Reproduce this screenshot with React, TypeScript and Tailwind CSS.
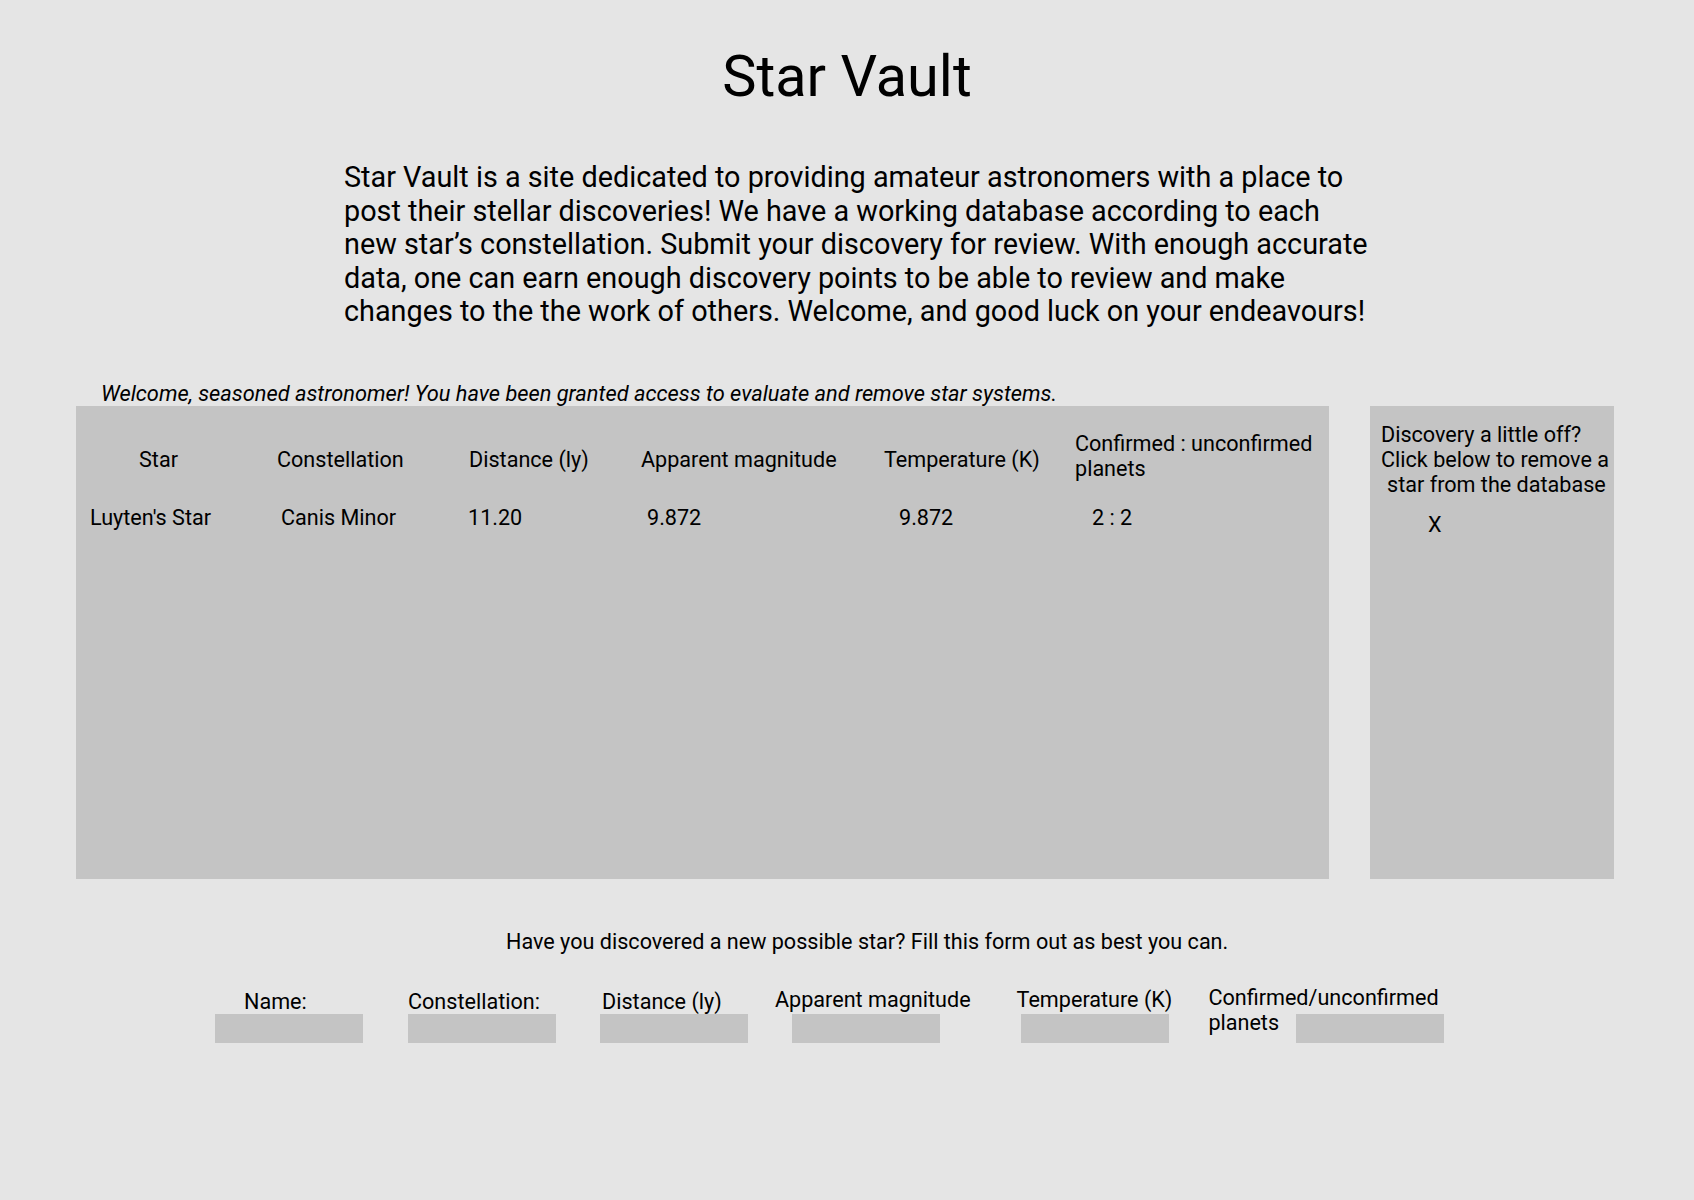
import React from "react";

const headers = [
  { label: "Star", cls: "pl-[63px] pt-[8px]" },
  { label: "Constellation", cls: "pl-[37px] pt-[8px]" },
  { label: "Distance (ly)", cls: "pl-[29px] pt-[8px]" },
  { label: "Apparent magnitude", cls: "pl-[21px] pt-[8px]" },
  { label: "Temperature (K)", cls: "pl-[24px] pt-[8px]" },
];

const row = [
  { value: "Luyten's Star", cls: "pl-[14px]" },
  { value: "Canis Minor", cls: "pl-[41px]" },
  { value: "11.20", cls: "pl-[28px]" },
  { value: "9.872", cls: "pl-[27px]" },
  { value: "9.872", cls: "pl-[39px]" },
  { value: "2 : 2", cls: "pl-[32px]" },
];

function Field({ label, labelCls = "", inputCls = "" }: { label: string; labelCls?: string; inputCls?: string }) {
  return (
    <div className="flex flex-col">
      <span className={`text-[21.6px] leading-[24px] whitespace-nowrap ${labelCls}`}>{label}</span>
      <div className={`h-[29px] w-[148px] bg-[#c4c4c4] ${inputCls}`} />
    </div>
  );
}

export default function App() {
  return (
    <div
      className="min-h-[1200px] w-full bg-[#e5e5e5] text-black"
      style={{ fontFamily: "Roboto, 'Noto Sans', sans-serif" }}
    >
      {/* Header */}
      <h1 className="pt-[44px] text-center text-[57.6px] leading-[66px] font-normal">Star Vault</h1>

      <p className="mt-[51px] ml-[344px] w-[1080px] text-[28.8px] leading-[33.6px]">
        Star Vault is a site dedicated to providing amateur astronomers with a place to
        <br />
        post their stellar discoveries! We have a working database according to each
        <br />
        new star’s constellation. Submit your discovery for review. With enough accurate
        <br />
        data, one can earn enough discovery points to be able to review and make
        <br />
        changes to the the work of others. Welcome, and good luck on your endeavours!
      </p>

      {/* Admin area */}
      <p className="mt-[53px] ml-[101px] text-[21.8px] leading-[24px] italic">
        Welcome, seasoned astronomer! You have been granted access to evaluate and remove star systems.
      </p>

      <div className="ml-[76px] flex gap-[41px]">
        <div className="h-[473px] w-[1253px] bg-[#c4c4c4] pt-[25px] text-[21.6px] leading-[25px]">
          <div className="grid grid-cols-[164px_200px_180px_240px_200px_1fr] items-center">
            {headers.map((h) => (
              <div key={h.label} className={h.cls}>
                {h.label}
              </div>
            ))}
            <div className="pl-[15px] whitespace-nowrap">
              Confirmed : unconfirmed
              <br />
              planets
            </div>
          </div>
          <div className="mt-[24px] grid grid-cols-[164px_200px_180px_240px_200px_1fr]">
            {row.map((c, i) => (
              <div key={i} className={c.cls}>
                {c.value}
              </div>
            ))}
          </div>
        </div>

        <div className="h-[473px] w-[244px] bg-[#c4c4c4] pt-[16px] pl-[11px] text-[21.6px] leading-[25px]">
          <div>Discovery a little off?</div>
          <div>Click below to remove a</div>
          <div className="pl-[6px]">star from the database</div>
          <button className="mt-[15px] ml-[47px] leading-[25px]">X</button>
        </div>
      </div>

      {/* Submission form */}
      <p className="mt-[51px] pl-[506px] text-[21.6px] leading-[24px]">
        Have you discovered a new possible star? Fill this form out as best you can.
      </p>

      <div className="mt-[32px] ml-[215px] flex items-end">
        <Field label="Name:" labelCls="pl-[29px]" />
        <div className="ml-[45px]">
          <Field label="Constellation:" />
        </div>
        <div className="ml-[44px]">
          <Field label="Distance (ly)" labelCls="pl-[2px]" />
        </div>
        <div className="ml-[27px]">
          <Field label="Apparent magnitude" labelCls="mb-[2px]" inputCls="ml-[17px]" />
        </div>
        <div className="ml-[46px]">
          <Field label="Temperature (K)" labelCls="mb-[2px]" inputCls="ml-[4px]" />
        </div>
        <div className="ml-[36px] flex flex-col">
          <span className="text-[21.6px] leading-[24px] whitespace-nowrap">Confirmed/unconfirmed</span>
          <div className="mt-[1px] flex items-start">
            <span className="text-[21.6px] leading-[24px]">planets</span>
            <div className="mt-[3px] ml-[17px] h-[29px] w-[148px] bg-[#c4c4c4]" />
          </div>
        </div>
      </div>
    </div>
  );
}
